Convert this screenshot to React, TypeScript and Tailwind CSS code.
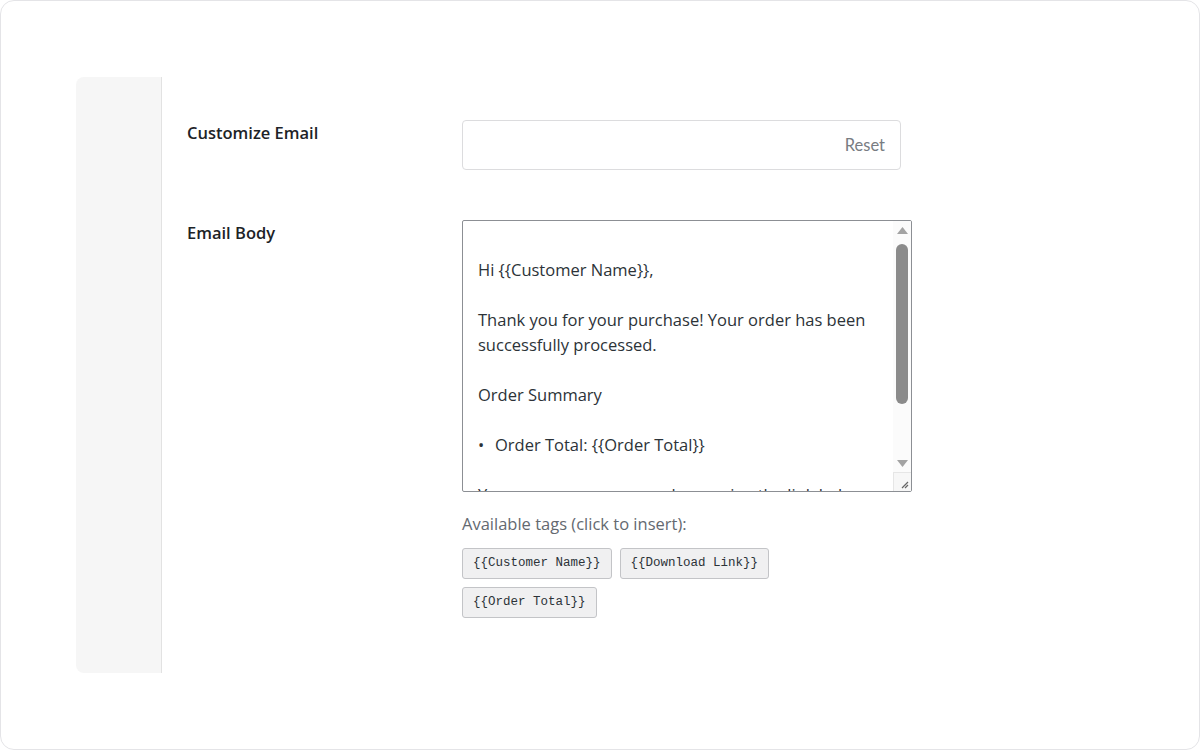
import React from "react";

const bodyLines: string[] = [
    "",
    "Hi {{Customer Name}},",
    "",
    "Thank you for your purchase! Your order has been",
    "successfully processed.",
    "",
    "Order Summary",
    "",
    "•BULLET",
    "",
    "You can access your purchase using the link below:",
    "",
    "{{Download Link}}",
];

const tags = ["{{Customer Name}}", "{{Download Link}}", "{{Order Total}}"];

const EmailBodyBox: React.FC = () => {
    return (
        <div className="flex w-[450px] h-[272px] border border-[#8c8f94] rounded-[2px] bg-white overflow-hidden">
            <div className="flex-1 overflow-hidden pl-[15px] pt-[11px] text-[16.5px] leading-[25px] text-[#2c3338] font-['Open_Sans',sans-serif]">
                {bodyLines.map((line, i) =>
                    line === "•BULLET" ? (
                        <div key={i} className="flex whitespace-nowrap">
                            <span className="w-[17px]">•</span>
                            <span>Order Total: {"{{Order Total}}"}</span>
                        </div>
                    ) : (
                        <div key={i} className="whitespace-nowrap h-[25px]">
                            {line}
                        </div>
                    )
                )}
            </div>
            {/* fake scrollbar */}
            <div className="flex flex-col w-[18px] bg-[#fbfbfb]">
                <div className="h-[18px] flex items-center justify-center">
                    <svg width="11" height="7" viewBox="0 0 11 7">
                        <path d="M5.5 0 L11 7 L0 7 Z" fill="#a3a3a3" />
                    </svg>
                </div>
                <div className="flex-1 flex flex-col px-[3px]">
                    <div className="mt-[5px] h-[160px] rounded-full bg-[#8b8b8b]" />
                </div>
                <div className="h-[18px] flex items-center justify-center">
                    <svg width="11" height="7" viewBox="0 0 11 7">
                        <path d="M0 0 L11 0 L5.5 7 Z" fill="#a3a3a3" />
                    </svg>
                </div>
                <div className="h-[19px] border-t border-l border-[#e6e6e6] bg-[#f7f7f7] flex items-end justify-end pr-[2px] pb-[2px]">
                    <svg width="9" height="9" viewBox="0 0 9 9">
                        <path d="M8 2 L2 8 M8 5 L5 8" stroke="#666" strokeWidth="1.2" />
                    </svg>
                </div>
            </div>
        </div>
    );
};

export default function App() {
    return (
        <div className="w-[1200px] h-[750px] bg-white">
            <div className="h-full border border-[#e4e4e7] rounded-[14px] bg-white pt-[76px] pl-[75px]">
                <div className="flex h-[596px]">
                    <div className="w-[86px] bg-[#f6f6f6] border-r border-[#e2e2e2] rounded-l-[8px]" />
                    <div className="flex-1 pl-[25px] pt-[43px] font-['Open_Sans',sans-serif]">
                        <div className="flex">
                            <div className="w-[275px] pt-[1px] text-[16.5px] font-semibold text-[#1d2327] leading-[24px]">
                                Customize Email
                            </div>
                            <div className="w-[439px] h-[50px] border border-[#dcdcde] rounded-[4px] flex items-center justify-end pr-[15px] text-[16.5px] text-[#787c82] font-['Lato',sans-serif]">
                                Reset
                            </div>
                        </div>

                        <div className="flex mt-[50px]">
                            <div className="w-[275px] pt-[1px] text-[16.5px] font-semibold text-[#1d2327] leading-[24px]">
                                Email Body
                            </div>
                            <div className="flex flex-col">
                                <EmailBodyBox />
                                <div className="mt-[21px] text-[16.5px] text-[#646970] leading-[22px]">
                                    Available tags (click to insert):
                                </div>
                                <div className="mt-[13px] flex flex-wrap gap-[8px] w-[320px]">
                                    {tags.map((t) => (
                                        <button
                                            key={t}
                                            className="h-[31px] px-[10px] bg-[#f0f0f1] border border-[#c3c4c7] rounded-[3px] text-[12.5px] text-[#2c3338] font-['Liberation_Mono',monospace]"
                                        >
                                            {t}
                                        </button>
                                    ))}
                                </div>
                            </div>
                        </div>
                    </div>
                </div>
            </div>
        </div>
    );
}
